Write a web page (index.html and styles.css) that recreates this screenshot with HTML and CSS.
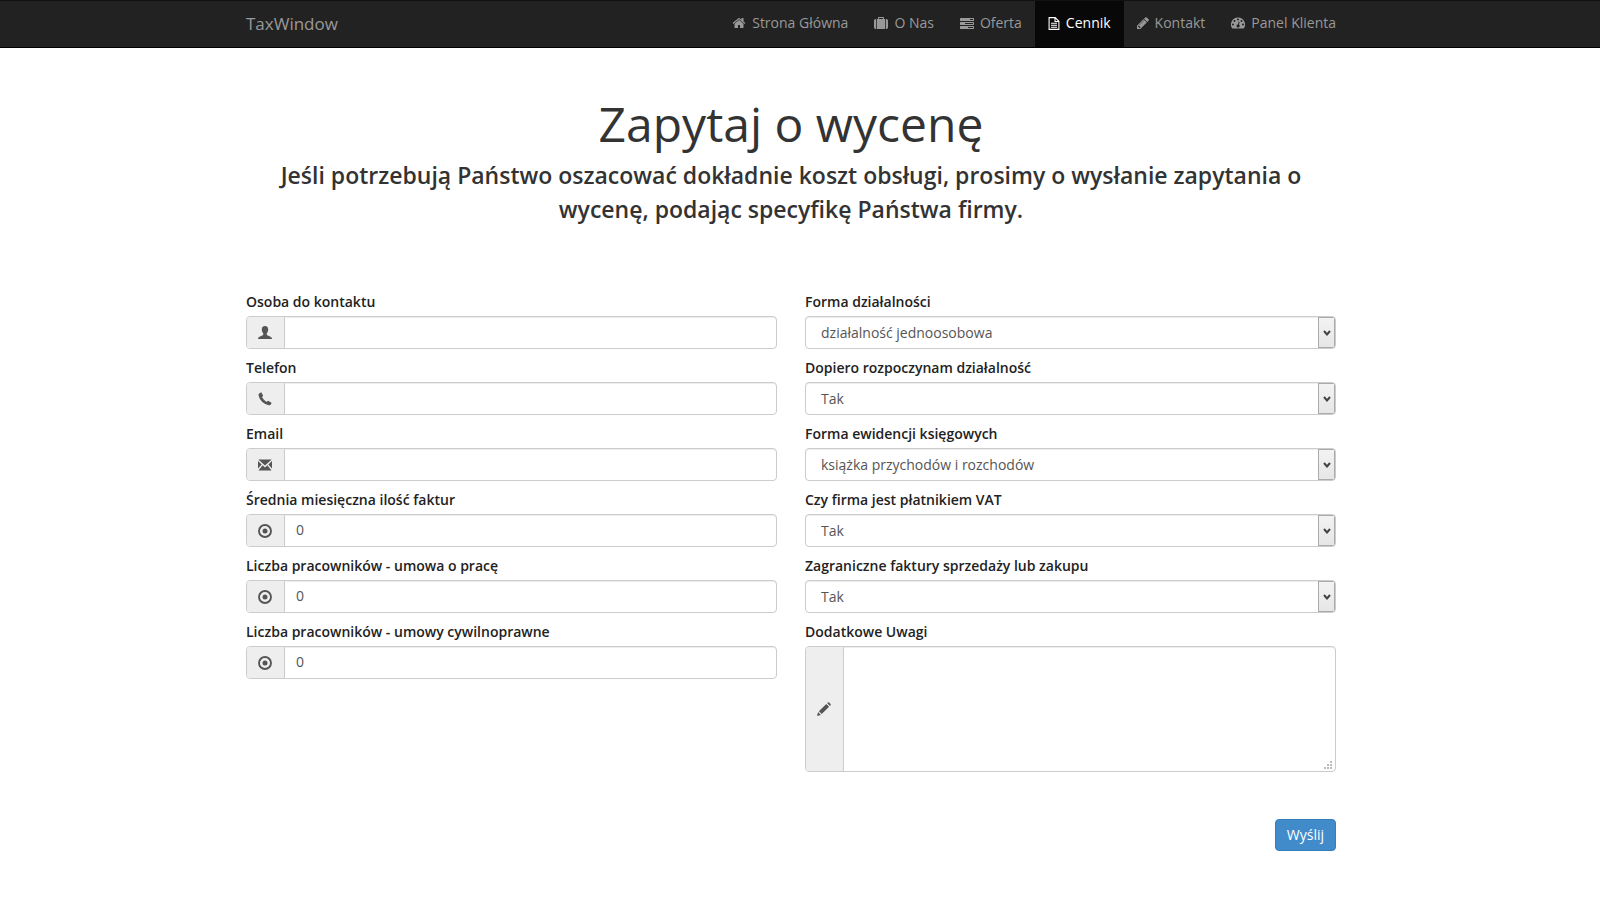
FILE: index.html
```html
<!DOCTYPE html>
<html lang="pl">
<head>
<meta charset="utf-8">
<meta name="viewport" content="width=device-width, initial-scale=1">
<title>TaxWindow - Cennik</title>
<link rel="stylesheet" href="styles.css">
</head>
<body>
<svg class="sprite" aria-hidden="true">
  <symbol id="user" viewBox="0 0 14 14"><path d="M7 0C4.800 0 3.800 1.500 3.800 3.500C3.800 5 4.300 6.400 5.200 7.200V9L1.500 10.800C.5 11.300 0 12 0 13H14C14 12 13.500 11.300 12.500 10.800L8.800 9V7.200C9.700 6.400 10.200 5 10.200 3.500C10.200 1.500 9.200 0 7 0Z"/></symbol>
  <symbol id="phone" viewBox="0 0 14 14"><path d="M1.200 1.400L2.700.4Q3.300.1 3.600.7L5 3.400Q5.200 4 4.700 4.400L3.900 5.100Q5.400 8 8.700 9.900L9.500 9.100Q10 8.700 10.500 9L13.200 10.500Q13.700 10.900 13.400 11.400L12.500 12.800Q11.900 13.500 10.800 13.300Q2.300 10.900.5 3.200Q.4 2 1.200 1.400Z"/></symbol>
  <symbol id="mail" viewBox="0 0 14 14"><path d="M.3 1.500H13.700L7 7.500ZM0 3L3.700 6.500L0 10.500ZM14 3L10.300 6.500L14 10.500ZM4.600 7.300L7 9.400L9.400 7.300L13.500 12.500H.5Z"/></symbol>
  <symbol id="record" viewBox="0 0 14 14"><circle cx="7" cy="7" r="6" fill="none" stroke="currentColor" stroke-width="1.900"/><circle cx="7" cy="7" r="2.500"/></symbol>
  <symbol id="pen" viewBox="0 0 14 14"><path d="M0 14L1.100 10.100L3.900 12.900ZM1.900 9.300L9.300 1.900L12.100 4.700L4.700 12.100ZM10.100 1.100L10.900.4Q11.500-.1 12.100.4L13.600 1.900Q14.100 2.500 13.600 3.100L12.900 3.900Z"/></symbol>
  <symbol id="home" viewBox="0 0 1792 1792"><path d="M1472 992v480q0 26-19 45t-45 19h-384v-384h-256v384h-384q-26 0-45-19t-19-45v-480q0-1 .5-3t.5-3l575-474 575 474q1 2 1 6zm223-69l-62 74q-8 9-21 11h-3q-13 0-21-7l-692-577-692 577q-12 8-24 7-13-2-21-11l-62-74q-8-10-7-23.500t11-21.500l719-599q32-26 76-26t76 26l244 204v-195q0-14 9-23t23-9h192q14 0 23 9t9 23v408l219 182q10 8 11 21.500t-7 23.500z"/></symbol>
  <symbol id="suitcase" viewBox="0 0 1792 1792"><path d="M640 384h512v-128h-512v128zm-352 0v1280h-64q-92 0-158-66t-66-158v-832q0-92 66-158t158-66h64zm1120 0v1280h-1024v-1280h128v-160q0-40 28-68t68-28h576q40 0 68 28t28 68v160h128zm384 224v832q0 92-66 158t-158 66h-64v-1280h64q92 0 158 66t66 158z"/></symbol>
  <symbol id="tasks" viewBox="0 0 1792 1792"><path d="M1024 1536h640v-128h-640v128zm-384-512h1024v-128h-1024v128zm640-512h384v-128h-384v128zm512 832v256q0 26-19 45t-45 19h-1664q-26 0-45-19t-19-45v-256q0-26 19-45t45-19h1664q26 0 45 19t19 45zm0-512v256q0 26-19 45t-45 19h-1664q-26 0-45-19t-19-45v-256q0-26 19-45t45-19h1664q26 0 45 19t19 45zm0-512v256q0 26-19 45t-45 19h-1664q-26 0-45-19t-19-45v-256q0-26 19-45t45-19h1664q26 0 45 19t19 45z"/></symbol>
  <symbol id="file" viewBox="0 0 12 14"><path d="M1.500 1.600H7.200L10.900 5.300V13.400H1.100V1.600ZM7 1.800V5.500H10.700M3 7.300H9M3 9.300H9M3 11.300H9" fill="none" stroke="currentColor" stroke-width="1.100"/></symbol>
  <symbol id="pencil" viewBox="128 128 1536 1536"><path d="M491 1536l91-91-235-235-91 91v107h128v128h107zm523-928q0-22-22-22-10 0-17 7l-542 542q-7 7-7 17 0 22 22 22 10 0 17-7l542-542q7-7 7-17zm-54-192l416 416-832 832h-416v-416zm683 96q0 53-37 90l-166 166-416-416 166-165q36-38 90-38 53 0 91 38l235 234q37 39 37 91z"/></symbol>
  <symbol id="gauge" viewBox="0 0 14 14"><path fill-rule="evenodd" d="M7 1.500A7 7 0 0 0 1.100 12.300Q1.300 12.500 1.500 12.500H12.500Q12.700 12.500 12.900 12.300A7 7 0 0 0 7 1.500ZM2 7.500a1 1 0 1 0 0 2a1 1 0 1 0 0-2ZM3.500 4a1 1 0 1 0 0 2a1 1 0 1 0 0-2ZM7 2.500a1 1 0 1 0 0 2a1 1 0 1 0 0-2ZM10.500 4a1 1 0 1 0 0 2a1 1 0 1 0 0-2ZM12 7.500a1 1 0 1 0 0 2a1 1 0 1 0 0-2ZM7.700 5.600L7 8.500A1.500 1.500 0 1 0 8 8.800L8.600 5.900Z"/></symbol>
</svg>

<header class="navbar">
  <div class="container navbar-inner">
    <a class="brand" href="#">TaxWindow</a>
    <nav class="nav">
      <a href="#"><svg class="nav-icon"><use href="#home"/></svg>Strona Główna</a>
      <a href="#"><svg class="nav-icon"><use href="#suitcase"/></svg>O Nas</a>
      <a href="#"><svg class="nav-icon"><use href="#tasks"/></svg>Oferta</a>
      <a class="active" href="#" aria-current="page"><svg class="nav-icon narrow"><use href="#file"/></svg>Cennik</a>
      <a href="#"><svg class="nav-icon narrow"><use href="#pencil"/></svg>Kontakt</a>
      <a href="#"><svg class="nav-icon"><use href="#gauge"/></svg>Panel Klienta</a>
    </nav>
  </div>
</header>

<main class="page">
  <div class="container">
    <div class="intro">
      <h1>Zapytaj o wycenę</h1>
      <p>Jeśli potrzebują Państwo oszacować dokładnie koszt obsługi, prosimy o wysłanie zapytania o wycenę, podając specyfikę Państwa firmy.</p>
    </div>

    <form>
      <div class="columns">
        <div class="column">
          <div class="field">
            <label for="person">Osoba do kontaktu</label>
            <div class="control"><span class="addon"><svg><use href="#user"/></svg></span><input id="person" type="text"></div>
          </div>
          <div class="field">
            <label for="tel">Telefon</label>
            <div class="control"><span class="addon"><svg><use href="#phone"/></svg></span><input id="tel" type="tel"></div>
          </div>
          <div class="field">
            <label for="email">Email</label>
            <div class="control"><span class="addon"><svg><use href="#mail"/></svg></span><input id="email" type="email"></div>
          </div>
          <div class="field">
            <label for="invoices">Średnia miesięczna ilość faktur</label>
            <div class="control"><span class="addon"><svg><use href="#record"/></svg></span><input id="invoices" type="text" inputmode="numeric" value="0"></div>
          </div>
          <div class="field">
            <label for="employees">Liczba pracowników - umowa o pracę</label>
            <div class="control"><span class="addon"><svg><use href="#record"/></svg></span><input id="employees" type="text" inputmode="numeric" value="0"></div>
          </div>
          <div class="field">
            <label for="contractors">Liczba pracowników - umowy cywilnoprawne</label>
            <div class="control"><span class="addon"><svg><use href="#record"/></svg></span><input id="contractors" type="text" inputmode="numeric" value="0"></div>
          </div>
        </div>
        <div class="column">
          <div class="field">
            <label for="business">Forma działalności</label>
            <div class="control"><select id="business"><option>działalność jednoosobowa</option></select><span class="arrow"><svg viewBox="0 0 8 6"><path d="M1 1L4 4.500L7 1"/></svg></span></div>
          </div>
          <div class="field">
            <label for="starting">Dopiero rozpoczynam działalność</label>
            <div class="control"><select id="starting"><option>Tak</option><option>Nie</option></select><span class="arrow"><svg viewBox="0 0 8 6"><path d="M1 1L4 4.500L7 1"/></svg></span></div>
          </div>
          <div class="field">
            <label for="records">Forma ewidencji księgowych</label>
            <div class="control"><select id="records"><option>książka przychodów i rozchodów</option></select><span class="arrow"><svg viewBox="0 0 8 6"><path d="M1 1L4 4.500L7 1"/></svg></span></div>
          </div>
          <div class="field">
            <label for="vat">Czy firma jest płatnikiem VAT</label>
            <div class="control"><select id="vat"><option>Tak</option><option>Nie</option></select><span class="arrow"><svg viewBox="0 0 8 6"><path d="M1 1L4 4.500L7 1"/></svg></span></div>
          </div>
          <div class="field">
            <label for="foreign">Zagraniczne faktury sprzedaży lub zakupu</label>
            <div class="control"><select id="foreign"><option>Tak</option><option>Nie</option></select><span class="arrow"><svg viewBox="0 0 8 6"><path d="M1 1L4 4.500L7 1"/></svg></span></div>
          </div>
          <div class="field">
            <label for="notes">Dodatkowe Uwagi</label>
            <div class="control"><span class="addon"><svg><use href="#pen"/></svg></span><textarea id="notes" rows="6"></textarea>
              <svg class="grip" viewBox="0 0 9 9"><path d="M6 0h2v2h-2zM3 3h2v2h-2zM6 3h2v2h-2zM0 6h2v2h-2zM3 6h2v2h-2zM6 6h2v2h-2z"/></svg></div>
          </div>
        </div>
      </div>
      <div class="actions"><button type="submit">Wyślij</button></div>
    </form>
  </div>
</main>
</body>
</html>
```

FILE: styles.css
```css
* { box-sizing: border-box; }

body {
  margin: 0;
  background: #fff;
  color: #333;
  font: 14px/20px "Open Sans", "Noto Sans", sans-serif;
}

.sprite { display: none; }

svg { fill: currentColor; }

.navbar,
.page { padding-right: 18px; }

.navbar {
  background: #222;
  border-top: 1px solid #111;
  border-bottom: 1px solid #000;
}

.container {
  width: 100%;
  max-width: 1090px;
  margin: 0 auto;
}

.navbar-inner {
  display: flex;
  justify-content: space-between;
}

.navbar a {
  color: #999;
  text-decoration: none;
}

.brand {
  padding: 13px 0;
  font-size: 17px;
}

.nav {
  display: flex;
  margin-right: -13px;
}

.nav a {
  display: flex;
  align-items: center;
  gap: 6px;
  padding: 12px 13px 14px;
}

.nav a.active {
  background: #080808;
  color: #fff;
}

.nav-icon {
  width: 14px;
  height: 14px;
}

.nav-icon.narrow { width: 12px; }

.intro {
  padding: 46px 28px 0;
  text-align: center;
}

h1 {
  margin: 0;
  font-size: 48px;
  font-weight: 400;
  line-height: 60px;
}

.intro p {
  margin: 4px 0 0;
  font-size: 23px;
  font-weight: 600;
  line-height: 34px;
}

form { padding-top: 66px; }

.columns {
  display: grid;
  grid-template-columns: 1fr 1fr;
  gap: 28px;
}

.column {
  display: flex;
  flex-direction: column;
  gap: 9px;
}

label {
  display: block;
  margin-bottom: 4px;
  color: #222;
  font-weight: 600;
}

.control {
  display: flex;
  position: relative;
  min-height: 33px;
  border: 1px solid #ccc;
  border-radius: 4px;
  background: #fff;
  box-shadow: inset 0 1px 1px rgba(0, 0, 0, 0.075);
  overflow: hidden;
}

.addon {
  display: flex;
  flex: none;
  align-items: center;
  justify-content: center;
  width: 38px;
  padding-right: 1px;
  border-right: 1px solid #ccc;
  background: #eee;
  color: #555;
}

.addon svg {
  width: 14px;
  height: 14px;
}

input,
select,
textarea {
  flex: 1;
  min-width: 0;
  margin: 0;
  padding: 0 11px 1px;
  border: 0;
  background: transparent;
  color: #555;
  font: inherit;
  outline: 0;
}

select {
  appearance: none;
  padding: 0 30px 0 15px;
}

textarea {
  padding: 2px 11px;
  resize: none;
}

.arrow {
  display: flex;
  position: absolute;
  top: 0;
  right: 0;
  bottom: 0;
  align-items: center;
  justify-content: center;
  width: 17px;
  border: 1px solid #aaa;
  background: linear-gradient(#f3f3f3, #e6e6e6);
  pointer-events: none;
}

.arrow svg {
  width: 8px;
  height: 6px;
  fill: none;
  stroke: #444;
  stroke-width: 2;
}

.grip {
  position: absolute;
  right: 2px;
  bottom: 1px;
  width: 9px;
  height: 9px;
  color: #bbb;
}

.actions {
  display: flex;
  justify-content: flex-end;
  padding: 47px 0;
}

button {
  padding: 5px 11px;
  border: 1px solid #357ebd;
  border-radius: 4px;
  background: #428bca;
  color: #fff;
  font: inherit;
  cursor: pointer;
}
```
